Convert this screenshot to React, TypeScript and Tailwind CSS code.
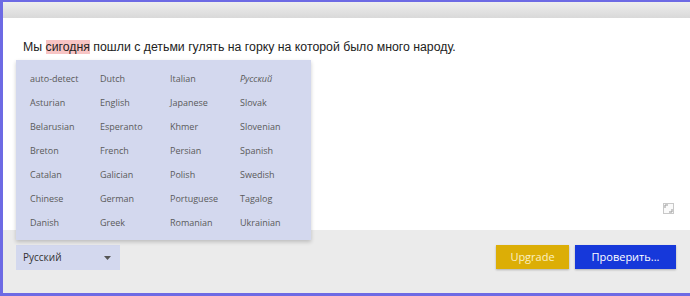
const languages = [
  ["auto-detect", "Dutch", "Italian", "Русский"],
  ["Asturian", "English", "Japanese", "Slovak"],
  ["Belarusian", "Esperanto", "Khmer", "Slovenian"],
  ["Breton", "French", "Persian", "Spanish"],
  ["Catalan", "Galician", "Polish", "Swedish"],
  ["Chinese", "German", "Portuguese", "Tagalog"],
  ["Danish", "Greek", "Romanian", "Ukrainian"],
];

const App = () => {
  return (
    <div className="w-[690px] h-[296px] flex flex-col bg-white border-l-[3px] border-t-2 border-b-[3px] border-[#6d6ae4] font-['Liberation_Sans',sans-serif]">
      <div className="h-[16px] bg-gradient-to-b from-[#eeeeee] to-[#d9d9d9]" />
      <div className="relative flex-1 bg-white">
        <p className="pl-[20px] pt-[21px] text-[12.3px] text-[#222] leading-[16px]">
          Мы <span className="bg-[#f7c4c4]">сигодня</span> пошли с детьми гулять на горку на которой было много народу.
        </p>
        <svg className="absolute left-[660px] top-[185px]" width="11" height="11" viewBox="0 0 11 11">
          <rect x="0.5" y="0.5" width="10" height="10" fill="#fafafa" stroke="#c8c8c8" />
          <path d="M2 5V2h3M9 6v3H6" fill="none" stroke="#999" strokeWidth="1" />
        </svg>
        <div className="absolute left-[13px] top-[42px] z-10 w-[295px] h-[180px] bg-[#d3d8ee] shadow-[0_2px_4px_rgba(0,0,0,0.2)] pl-[14px] pt-[7px] font-['Open_Sans',sans-serif] text-[9px] text-[#5a5a5a]">
          {languages.map((row, i) => (
            <div key={i} className="grid grid-cols-[70px_70px_70px_70px] h-[24px] items-center">
              {row.map((lang) => (
                <span key={lang} className={lang === "Русский" ? "italic" : ""}>
                  {lang}
                </span>
              ))}
            </div>
          ))}
        </div>
      </div>
      <div className="h-[63px] bg-[#ebebeb] flex items-start justify-between pl-[13px] pr-[14px] pt-[15px] font-['Open_Sans',sans-serif]">
        <div className="w-[104px] h-[25px] bg-[#d3d8ee] flex items-center justify-between pl-[7px] pr-[9px] text-[10px] text-[#333]">
          Русский
          <svg width="7" height="4" viewBox="0 0 7 4">
            <path d="M0 0h7L3.5 4z" fill="#555" />
          </svg>
        </div>
        <div className="flex gap-[6px]">
          <button className="w-[73px] h-[24px] bg-[#dcae06] text-[#fbf0c4] text-[11px] shadow-[0_1px_2px_rgba(0,0,0,0.25)]">
            Upgrade
          </button>
          <button className="w-[101px] h-[24px] bg-[#1638da] text-white text-[11px] shadow-[0_1px_2px_rgba(0,0,0,0.25)]">
            Проверить...
          </button>
        </div>
      </div>
    </div>
  );
};

export default App;
